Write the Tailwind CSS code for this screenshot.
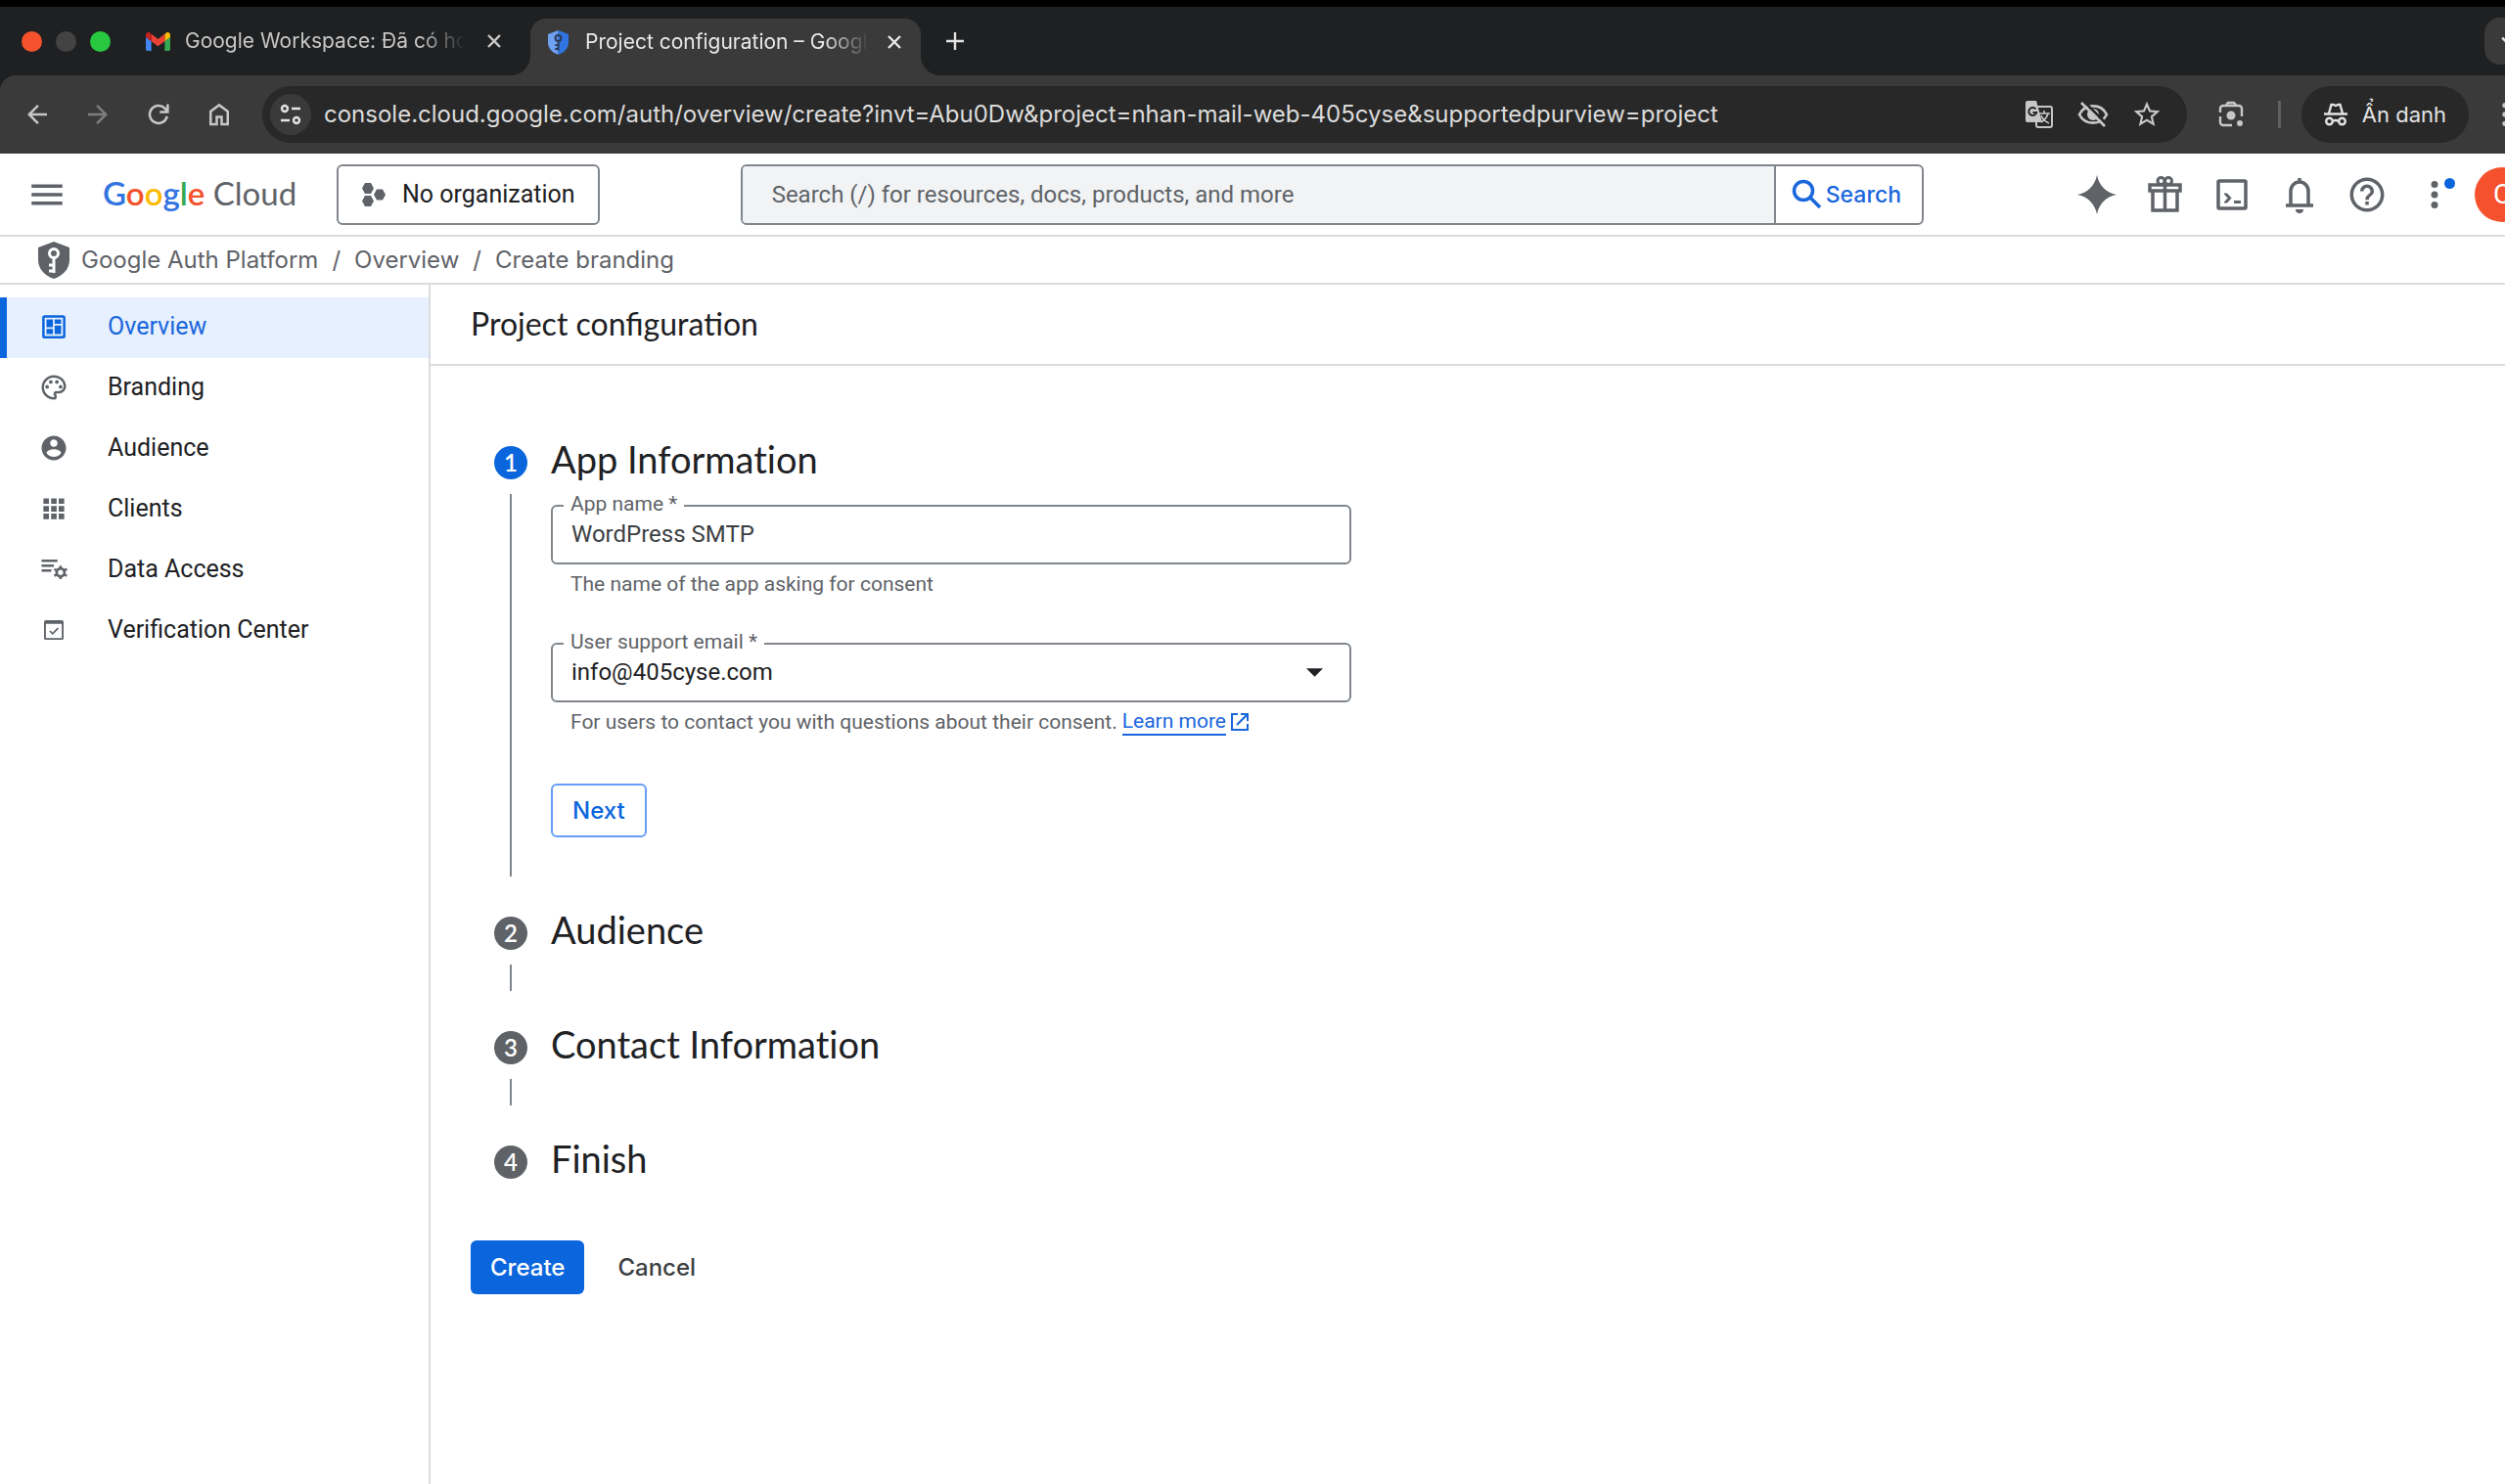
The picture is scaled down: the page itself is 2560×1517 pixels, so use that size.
<!DOCTYPE html>
<html lang="en">
<head>
    <meta charset="UTF-8">
    <meta name="viewport" content="width=device-width, initial-scale=1.0">
    <title>Project configuration – Google Auth Platform</title>
    <script src="https://cdn.jsdelivr.net/npm/@tailwindcss/browser@4"></script>
</head>
<body class="bg-white min-h-screen flex flex-col overflow-x-hidden font-['Roboto',sans-serif] text-[24px] leading-8 text-[#202124]">

    <!-- browser window -->
    <div class="bg-[#1f2022] border-t-7 border-black font-['Inter',sans-serif] text-[#e3e3e3] overflow-hidden">

        <!-- tab strip -->
        <div class="flex items-end h-[70px] text-[21px] leading-7">
            <div class="flex items-center h-full pl-[22px] gap-[14px]">
                <span class="size-[21px] rounded-full bg-[#f4512c]"></span>
                <span class="size-[21px] rounded-full bg-[#434343]"></span>
                <span class="size-[21px] rounded-full bg-[#28c840]"></span>
            </div>

            <div class="flex items-center h-full w-[429px] pl-[36px] text-[#c7c7c7]">
                <svg class="w-[25px] h-[19px]" viewBox="52 42 88 66">
                    <path fill="#4285f4" d="M58 108h14V74L52 59v43c0 3.32 2.69 6 6 6"/>
                    <path fill="#34a853" d="M120 108h14c3.32 0 6-2.69 6-6V59l-20 15"/>
                    <path fill="#fbbc04" d="M120 48v26l20-15v-8c0-7.42-8.47-11.65-14.4-7.2"/>
                    <path fill="#ea4335" d="M72 74V48l24 18 24-18v26L96 92"/>
                    <path fill="#c5221f" d="M52 51v8l20 15V48l-5.6-4.2c-5.94-4.45-14.4-.22-14.4 7.2"/>
                </svg>
                <span class="ml-[15px] w-[286px] overflow-hidden whitespace-nowrap mask-r-from-84%">Google Workspace: Đã có hoá đơn</span>
                <button type="button" aria-label="Close tab" class="ml-[18px]">
                    <svg class="size-[24px]" viewBox="0 0 24 24" fill="none" stroke="currentColor" stroke-width="2.4"><path d="M6 6l12 12M18 6L6 18"/></svg>
                </button>
            </div>

            <div class="relative flex items-center h-[58px] w-[399px] pl-[18px] pb-[10px] rounded-t-2xl bg-[#3a3a3a] text-[#e8e8e8]">
                <svg class="absolute bottom-0 -left-[20px] size-[20px]" viewBox="0 0 20 20" fill="#3a3a3a"><path d="M20 0v20H0A20 20 0 0 0 20 0z"/></svg>
                <svg class="absolute bottom-0 -right-[20px] size-[20px]" viewBox="0 0 20 20" fill="#3a3a3a"><path d="M0 0v20h20A20 20 0 0 1 0 0z"/></svg>
                <svg class="w-[21px] h-[25px]" viewBox="0 0 32 38">
                    <path fill="#6ea1f2" d="M16 0L0 6v13c0 9 7 16 16 19z"/>
                    <path fill="#2f74e0" d="M16 0l16 6v13c0 9-7 16-16 19z"/>
                    <g fill="none" stroke="#2b3a55" stroke-width="3"><circle cx="16" cy="12" r="4.5"/><path d="M16 16v15M16 23h-5M16 29h-5"/></g>
                </svg>
                <span class="ml-[17px] w-[290px] overflow-hidden whitespace-nowrap mask-r-from-84%">Project configuration – Google Auth</span>
                <button type="button" aria-label="Close tab" class="ml-[14px]">
                    <svg class="size-[24px]" viewBox="0 0 24 24" fill="none" stroke="currentColor" stroke-width="2.4"><path d="M6 6l12 12M18 6L6 18"/></svg>
                </button>
            </div>
            <button type="button" aria-label="New tab" class="ml-[23px] h-full">
                <svg class="size-[24px]" viewBox="0 0 24 24" fill="none" stroke="currentColor" stroke-width="2.4"><path d="M12 3v18M3 12h18"/></svg>
            </button>
            <button type="button" aria-label="Search tabs" class="shrink-0 flex items-center justify-center self-center ml-auto -mr-[27px] size-[48px] rounded-2xl bg-[#3a3a3a]">
                <svg class="size-[20px]" viewBox="0 0 24 24" fill="none" stroke="currentColor" stroke-width="3"><path d="M5 8l7 7 7-7"/></svg>
            </button>
        </div>

        <!-- toolbar -->
        <div class="flex items-center h-[80px] bg-[#3a3a3a] rounded-tl-2xl pl-[23px] text-[#c7c7c7]">
            <div class="flex gap-8 mr-[29px]">
                <button type="button" aria-label="Back"><svg class="size-[30px]" viewBox="0 0 24 24" fill="currentColor"><path d="M20 11H7.83l5.59-5.59L12 4l-8 8 8 8 1.41-1.41L7.83 13H20v-2z"/></svg></button>
                <button type="button" aria-label="Forward" class="text-[#7d7d7d]"><svg class="size-[30px]" viewBox="0 0 24 24" fill="currentColor"><path d="M4 11h12.17l-5.59-5.59L12 4l8 8-8 8-1.41-1.41L16.17 13H4v-2z"/></svg></button>
                <button type="button" aria-label="Reload"><svg class="size-[30px]" viewBox="0 0 24 24" fill="none" stroke="currentColor" stroke-width="2"><path d="M19 13.5A7.2 7.2 0 1 1 17 6.8L19.3 9.5M19.5 3.5V10H13"/></svg></button>
                <button type="button" aria-label="Home"><svg class="size-[30px]" viewBox="0 0 24 24" fill="currentColor"><path d="M6 19h3v-6h6v6h3v-9l-6-4.5L6 10v9zm-2 2V9l8-6 8 6v12h-7v-6h-2v6H4z"/></svg></button>
            </div>
            <div class="flex items-center flex-1 h-[58px] rounded-full bg-[#282828] pl-2 pr-[25px]">
                <button type="button" aria-label="Site information" class="flex items-center justify-center size-[42px] rounded-full bg-[#3a3a3a] text-[#e3e3e3]">
                    <svg class="size-[24px]" viewBox="0 0 24 24" fill="none" stroke="currentColor" stroke-width="2.4"><circle cx="6" cy="6" r="3"/><path d="M13 6h9M2 18h9"/><circle cx="18" cy="18" r="3"/></svg>
                </button>
                <input type="text" aria-label="Address" readonly value="console.cloud.google.com/auth/overview/create?invt=Abu0Dw&amp;project=nhan-mail-web-405cyse&amp;supportedpurview=project" class="flex-1 min-w-0 ml-[13px] bg-transparent outline-none text-[24px] text-[#dcdcdc]">
                <div class="flex items-center gap-[23px]">
                    <button type="button" aria-label="Translate this page">
                        <svg class="size-[32px]" viewBox="0 0 32 32">
                            <rect x="13" y="8" width="16" height="21" rx="2" fill="none" stroke="#c7c7c7" stroke-width="2"/>
                            <path fill="none" stroke="#c7c7c7" stroke-width="1.6" d="M16 15h11M21 12v3M25 15c-1 4-4 7-7 9M18 17c1 3 4 6 8 8"/>
                            <path fill="#c7c7c7" d="M4 2h9l6 22H4a2 2 0 0 1-2-2V4a2 2 0 0 1 2-2z"/>
                            <path fill="none" stroke="#282828" stroke-width="2" d="M12.5 10.5a4 4 0 1 0 .7 3.5H9.5"/>
                        </svg>
                    </button>
                    <button type="button" aria-label="Third-party cookies blocked">
                        <svg class="size-[32px]" viewBox="0 0 24 24" fill="none" stroke="currentColor" stroke-width="2">
                            <path d="M1.5 12C3.5 8 7.5 5.5 12 5.5S20.5 8 22.5 12c-2 4-6 6.5-10.5 6.5S3.5 16 1.5 12z"/>
                            <circle cx="12" cy="12" r="3.5" fill="currentColor"/>
                            <path stroke="#282828" d="M4.5 1.5l18 18"/><path d="M3 3l18 18"/>
                        </svg>
                    </button>
                    <button type="button" aria-label="Bookmark this tab">
                        <svg class="size-[32px]" viewBox="0 0 24 24" fill="currentColor"><path d="M22 9.24l-7.19-.62L12 2 9.19 8.63 2 9.24l5.46 4.73L5.82 21 12 17.27 18.18 21l-1.63-7.03L22 9.24zM12 15.4l-3.76 2.27 1-4.28-3.32-2.88 4.38-.38L12 6.1l1.71 4.04 4.38.38-3.32 2.88 1 4.28L12 15.4z"/></svg>
                    </button>
                </div>
            </div>
            <button type="button" aria-label="Search with Google Lens" class="ml-[29px]">
                <svg class="size-[32px]" viewBox="0 0 32 32" fill="none" stroke="currentColor" stroke-width="2.4"><path d="M5 14v-4a3 3 0 0 1 3-3h16a3 3 0 0 1 3 3v8M5 18v6a3 3 0 0 0 3 3h9M11 6l2-2h6l2 2"/><circle cx="16" cy="17" r="4.5" fill="currentColor" stroke="none"/><circle cx="25" cy="25" r="3" fill="currentColor" stroke="none"/></svg>
            </button>
            <span class="w-[3px] h-[28px] ml-[32px] mr-[21px] bg-[#5e6063]"></span>
            <div class="flex items-center gap-[13px] h-[58px] rounded-full bg-[#282828] pl-[21px] pr-[23px] text-[22px] text-[#e3e3e3]">
                <svg class="size-[28px]" viewBox="0 0 28 28" fill="none" stroke="currentColor" stroke-width="2.4"><path d="M2 13.5h24M7 13l2.5-9h2l2.5 1 2.5-1h2L21 13"/><circle cx="7.5" cy="21" r="3.3"/><circle cx="20.5" cy="21" r="3.3"/><path d="M11 20.5q3-1 6 0"/></svg>
                <span class="whitespace-nowrap">Ẩn danh</span>
            </div>
            <button type="button" aria-label="Chrome menu" class="shrink-0 ml-[21px] -mr-4">
                <svg class="size-[32px]" viewBox="0 0 24 24" fill="currentColor"><circle cx="12" cy="5" r="2"/><circle cx="12" cy="12" r="2"/><circle cx="12" cy="19" r="2"/></svg>
            </button>
        </div>
    </div>

    <!-- console header -->
    <header class="flex items-center h-[85px] pl-[27px] border-b-2 border-[#dadce0] text-[#5f6368] overflow-hidden">
        <button type="button" aria-label="Main menu">
            <svg class="size-[42px]" viewBox="0 0 24 24" fill="currentColor"><path d="M3 18h18v-2H3v2zm0-5h18v-2H3v2zm0-7v2h18V6H3z"/></svg>
        </button>
        <a href="#" class="ml-9 pb-1 w-[203px] whitespace-nowrap font-['Lato',sans-serif] text-[33px]"><span class="font-semibold"><span class="text-[#3374e0]">G</span><span class="text-[#f4512c]">o</span><span class="text-[#fbbc04]">o</span><span class="text-[#3374e0]">g</span><span class="text-[#34a853]">l</span><span class="text-[#f4512c]">e</span></span> Cloud</a>
        <button type="button" class="flex items-center gap-4 ml-9 h-[62px] px-[23px] rounded-md border-2 border-[#80868b] text-[#202124]">
            <svg class="size-[26px]" viewBox="0 0 26 26" fill="#5f6368"><path d="M4 1h6l3 5.5-3 5.5H4L1 6.5zM4 14h6l3 5.5-3 5.5H4l-3-5.5zM16 7.5h6l3 5.5-3 5.5h-6l-3-5.5z"/></svg>
            <span class="whitespace-nowrap text-[25px]">No organization</span>
        </button>
        <form class="flex flex-1 h-[62px] ml-[144px] mr-[156px] rounded-md border-2 border-[#80868b] overflow-hidden">
            <input type="text" aria-label="Search" placeholder="Search (/) for resources, docs, products, and more" class="flex-1 px-[30px] bg-[#f1f3f4] outline-none placeholder:text-[#5f6368]">
            <button type="submit" class="flex items-center gap-[3px] pl-[14px] pr-[21px] border-l-2 border-[#80868b] font-['Inter',sans-serif] font-medium text-[23px] text-[#1a66dc]">
                <svg class="size-[34px]" viewBox="0 0 34 34" fill="none" stroke="currentColor" stroke-width="3.5"><circle cx="14" cy="13" r="9.5"/><path d="M20.5 19.5L31 30"/></svg>
                Search
            </button>
        </form>
        <div class="flex items-center gap-[27px] shrink-0 -mr-[25px]">
            <button type="button" aria-label="Gemini"><svg class="size-[42px]" viewBox="0 0 42 42" fill="currentColor"><path d="M21 1c2 10 9 18 20 20-11 2-18 10-20 20C19 31 12 23 1 21 12 19 19 11 21 1z"/></svg></button>
            <button type="button" aria-label="Free trial"><svg class="size-[42px]" viewBox="0 0 42 42" fill="none" stroke="currentColor" stroke-width="3.5"><path d="M6 11h31v6H6zM9 17v20h25V17M21.5 11v26"/><circle cx="17.5" cy="7" r="3.5" stroke-width="3"/><circle cx="25" cy="7" r="3.5" stroke-width="3"/></svg></button>
            <button type="button" aria-label="Cloud Shell"><svg class="size-[42px]" viewBox="0 0 42 42" fill="none" stroke="currentColor" stroke-width="3.5"><rect x="7" y="7" width="28" height="28" rx="1"/><path d="M13 20h3l4 4.5-4 4.5h-3l4-4.5z" fill="currentColor" stroke-width="1"/><path d="M23 28.5h7" stroke-width="3"/></svg></button>
            <button type="button" aria-label="Notifications"><svg class="size-[42px]" viewBox="0 0 42 42" fill="none" stroke="currentColor" stroke-width="3.5"><path d="M7 32h28M12 32V17a9 9 0 0 1 18 0v15M21 4v4"/><path d="M17 36h8a4 4 0 0 1-8 0z" fill="currentColor" stroke="none"/></svg></button>
            <button type="button" aria-label="Help"><svg class="size-[42px]" viewBox="0 0 24 24" fill="currentColor"><path d="M11 18h2v-2h-2v2zm1-16C6.48 2 2 6.48 2 12s4.48 10 10 10 10-4.48 10-10S17.52 2 12 2zm0 18c-4.41 0-8-3.59-8-8s3.59-8 8-8 8 3.59 8 8-3.59 8-8 8zm0-14c-2.21 0-4 1.79-4 4h2c0-1.1.9-2 2-2s2 .9 2 2c0 2-3 1.75-3 5h2c0-2.25 3-2.5 3-5 0-2.21-1.79-4-4-4z"/></svg></button>
            <button type="button" aria-label="More options" class="relative">
                <svg class="size-[42px]" viewBox="0 0 24 24" fill="currentColor"><circle cx="12" cy="6" r="2"/><circle cx="12" cy="12" r="2"/><circle cx="12" cy="18" r="2"/></svg>
                <span class="absolute top-1 right-0 size-[11px] rounded-full bg-[#0b66dd]"></span>
            </button>
            <button type="button" aria-label="Account" class="-ml-[7px] size-[56px] rounded-full bg-[#f4512c] text-white text-[28px]">C</button>
        </div>
    </header>

    <!-- breadcrumb -->
    <nav aria-label="Breadcrumb" class="flex items-center h-[49px] pl-[39px] border-b-2 border-[#dadce0] font-['Inter',sans-serif] text-[#5f6368]">
        <svg class="w-[32px] h-[38px] mr-3" viewBox="0 0 32 38">
            <path fill="#5f6368" d="M16 0L0 6v13c0 9 7 16 16 19 9-3 16-10 16-19V6z"/>
            <g fill="none" stroke="#fff" stroke-width="3"><circle cx="16" cy="12" r="4.5"/><path d="M16 16v16M16 24h-5M16 30h-5"/></g>
        </svg>
        <a href="#">Google Auth Platform</a><span class="mx-[14px]">/</span>
        <a href="#">Overview</a><span class="mx-[14px]">/</span>
        <a href="#">Create branding</a>
    </nav>

    <div class="flex flex-1">
        <!-- side navigation -->
        <nav aria-label="Google Auth Platform" class="w-[440px] pt-[13px] border-r-2 border-[#dadce0] text-[25px]
            [&>a]:flex
            [&>a]:items-center
            [&>a]:h-[62px]
            [&>a]:pb-[2px]
            [&>a]:pl-[40px]
            [&>a]:gap-[40px]
            [&_svg]:size-[30px]
            [&_svg]:fill-[#5f6368]
        ">
            <a href="#" aria-current="page" class="relative bg-[#e6f0ff] text-[#1a66dc] before:absolute before:inset-y-0 before:left-0 before:w-[7px] before:bg-[#0b66dd]">
                <svg class="fill-[#0b66dd]!" viewBox="0 0 24 24"><path fill-rule="evenodd" d="M4.5 2.5h15a2 2 0 0 1 2 2v15a2 2 0 0 1-2 2h-15a2 2 0 0 1-2-2v-15a2 2 0 0 1 2-2zM4.5 4.5v15h15v-15z"/><path d="M6 6h5.3v6.3H6zM12.7 6H18v3.6h-5.3zM6 13.7h5.3V18H6zM12.7 11H18v7h-5.3z"/></svg>
                Overview
            </a>
            <a href="#">
                <svg viewBox="0 0 24 24"><path d="M12 22C6.49 22 2 17.51 2 12S6.49 2 12 2s10 4.04 10 9c0 3.31-2.69 6-6 6h-1.77c-.28 0-.5.22-.5.5 0 .12.05.23.13.33.41.47.64 1.06.64 1.67A2.5 2.5 0 0 1 12 22zm0-18c-4.41 0-8 3.59-8 8s3.59 8 8 8c.28 0 .5-.22.5-.5a.54.54 0 0 0-.14-.35c-.41-.46-.63-1.05-.63-1.65a2.5 2.5 0 0 1 2.5-2.5H16c2.21 0 4-1.79 4-4 0-3.86-3.59-7-8-7z"/><circle cx="6.5" cy="11.5" r="1.5"/><circle cx="9.5" cy="7.5" r="1.5"/><circle cx="14.5" cy="7.5" r="1.5"/><circle cx="17.5" cy="11.5" r="1.5"/></svg>
                Branding
            </a>
            <a href="#">
                <svg viewBox="0 0 24 24"><path d="M12 2C6.48 2 2 6.48 2 12s4.48 10 10 10 10-4.48 10-10S17.52 2 12 2zm0 3c1.66 0 3 1.34 3 3s-1.34 3-3 3-3-1.34-3-3 1.34-3 3-3zm0 14.2c-2.5 0-4.71-1.28-6-3.22.03-1.99 4-3.08 6-3.08 1.99 0 5.97 1.09 6 3.08-1.29 1.94-3.5 3.22-6 3.22z"/></svg>
                Audience
            </a>
            <a href="#">
                <svg viewBox="0 0 24 24"><path d="M3.5 3.5H8V8H3.5zM9.8 3.5h4.5V8H9.8zM16 3.5h4.5V8H16zM3.5 9.8H8v4.5H3.5zM9.8 9.8h4.5v4.5H9.8zM16 9.8h4.5v4.5H16zM3.5 16H8v4.5H3.5zM9.8 16h4.5v4.5H9.8zM16 16h4.5v4.5H16z"/></svg>
                Clients
            </a>
            <a href="#">
                <svg viewBox="0 0 24 24"><path d="M2 4h13v2H2zM2 8h10v2H2zM2 12h8v2H2z"/><circle cx="17.5" cy="14.5" r="3.2" fill="none" stroke="#5f6368" stroke-width="2.2"/><path d="M16.5 9h2v2.5h-2zM16.5 17.5h2V20h-2zM11.9 12.6l1-1.7 2.1 1.2-1 1.7zM20.1 17l1-1.7 2.1 1.2-1 1.7zM11.9 16.4l2.1-1.2 1 1.7-2.1 1.2zM20.1 12l2.1-1.2 1 1.7-2.1 1.2z"/></svg>
                Data Access
            </a>
            <a href="#">
                <svg viewBox="0 0 24 24"><path fill-rule="evenodd" d="M5.5 4h13A1.5 1.5 0 0 1 20 5.5v13a1.5 1.5 0 0 1-1.5 1.5h-13A1.5 1.5 0 0 1 4 18.500v-13A1.5 1.5 0 0 1 5.5 4zM5.5 7v11.5h13V7z"/><path fill="none" stroke="#5f6368" stroke-width="1.4" d="M8.8 12.8l2.2 2.2 4.5-4.5"/></svg>
                Verification Center
            </a>
        </nav>

        <main class="flex-1">
            <h1 class="flex items-center h-[83px] pl-[41px] pb-[2px] border-b-2 border-[#dadce0] font-['Lato',sans-serif] text-[32px]">Project configuration</h1>

            <form class="pt-[82px] pl-[41px]">
                <ol class="pl-6
                    [&>li]:flex
                    [&>li]:gap-6
                    [&_h2]:font-['Lato',sans-serif]
                    [&_h2]:[font-variant-ligatures:none]
                    [&_h2]:text-[38px]
                    [&_h2]:h-[34px]
                    [&_h2]:leading-[26px]
                ">
                    <li>
                        <div class="flex flex-col items-center gap-[15px] pb-[41px]">
                            <span class="flex items-center justify-center size-[34px] rounded-full bg-[#0b66dd] font-['Lato',sans-serif] font-semibold text-white">1</span>
                            <span class="flex-1 w-[2px] bg-[#80868b]"></span>
                        </div>
                        <div class="w-[818px] pb-[81px]">
                            <h2>App Information</h2>
                            <div class="relative mt-[26px]">
                                <label for="app-name" class="absolute -top-[15px] left-[13px] px-[7px] bg-white text-[21px] leading-7 text-[#5f6368]">App name *</label>
                                <input type="text" id="app-name" value="WordPress SMTP" class="block w-full h-[61px] px-[19px] pb-[2px] rounded-md border-2 border-[#80868b] outline-none text-[#3c4043]">
                            </div>
                            <p class="mt-1 pl-[20px] text-[21px] text-[#5f6368]">The name of the app asking for consent</p>

                            <div class="relative mt-11">
                                <label for="support-email" class="absolute -top-[15px] left-[13px] px-[7px] bg-white text-[21px] leading-7 text-[#5f6368]">User support email *</label>
                                <select id="support-email" class="block w-full h-[61px] px-[19px] pb-[2px] rounded-md border-2 border-[#80868b] outline-none appearance-none">
                                    <option>info@405cyse.com</option>
                                </select>
                                <svg class="absolute top-[26px] right-[29px] w-[17px] h-[9px] pointer-events-none" viewBox="0 0 16 8" fill="#202124"><path d="M0 0h16L8 8z"/></svg>
                            </div>
                            <p class="flex items-center mt-1 pl-[20px] text-[21px] text-[#5f6368] whitespace-nowrap">
                                For users to contact you with questions about their consent.
                                <a href="#" class="flex items-center ml-[5px] text-[#1a66dc]"><span class="border-b-2 leading-[26px]">Learn more</span>
                                    <svg class="ml-1 size-[20px]" viewBox="0 0 20 20" fill="none" stroke="currentColor" stroke-width="2"><path d="M8 2H2v16h16v-6M11 2h7v7M18 2L7 13"/></svg>
                                </a>
                            </p>
                            <button type="button" class="mt-[47px] h-[55px] px-[20px] rounded-md border-2 border-[#669df6] font-['Inter',sans-serif] font-medium text-[#0b66dd]">Next</button>
                        </div>
                    </li>
                    <li>
                        <div class="flex flex-col items-center gap-[15px] pb-[41px]">
                            <span class="flex items-center justify-center size-[34px] rounded-full bg-[#5f6368] font-['Lato',sans-serif] font-semibold text-white">2</span>
                            <span class="w-[2px] h-[27px] bg-[#80868b]"></span>
                        </div>
                        <h2>Audience</h2>
                    </li>
                    <li>
                        <div class="flex flex-col items-center gap-[15px] pb-[41px]">
                            <span class="flex items-center justify-center size-[34px] rounded-full bg-[#5f6368] font-['Lato',sans-serif] font-semibold text-white">3</span>
                            <span class="w-[2px] h-[27px] bg-[#80868b]"></span>
                        </div>
                        <h2>Contact Information</h2>
                    </li>
                    <li>
                        <span class="flex items-center justify-center size-[34px] rounded-full bg-[#5f6368] font-['Lato',sans-serif] font-semibold text-white">4</span>
                        <h2>Finish</h2>
                    </li>
                </ol>

                <div class="flex gap-[14px] mt-[63px] font-['Inter',sans-serif] font-medium">
                    <button type="submit" class="h-[55px] px-[20px] rounded-md bg-[#0b66dd] text-white">Create</button>
                    <button type="button" class="h-[55px] px-[20px] text-[#3c4043]">Cancel</button>
                </div>
            </form>
        </main>
    </div>
</body>
</html>
